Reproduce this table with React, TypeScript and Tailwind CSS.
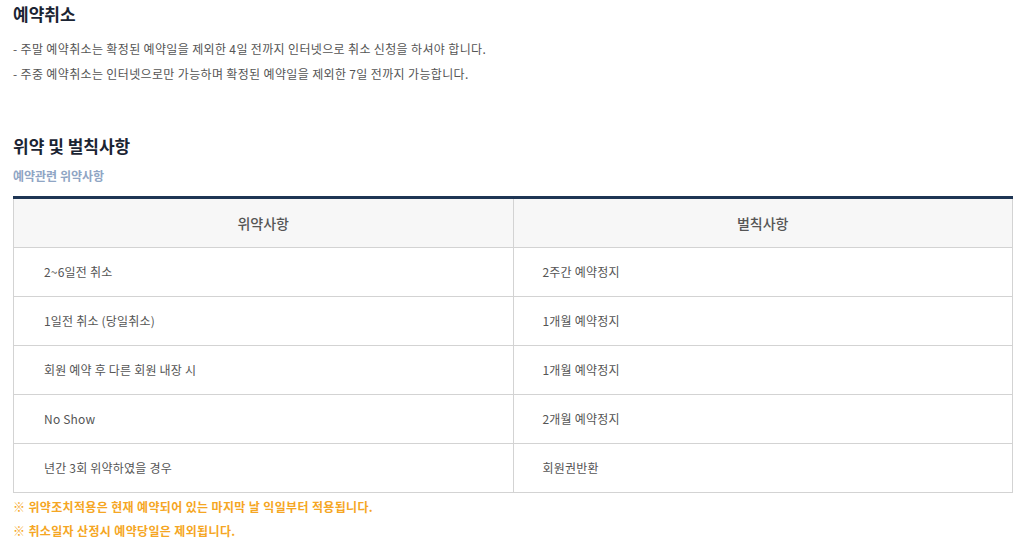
const rows: [string, string][] = [
  ['2~6일전 취소', '2주간 예약정지'],
  ['1일전 취소 (당일취소)', '1개월 예약정지'],
  ['회원 예약 후 다른 회원 내장 시', '1개월 예약정지'],
  ['No Show', '2개월 예약정지'],
  ['년간 3회 위약하였을 경우', '회원권반환'],
];

export default function App() {
  return (
    <div
      className="w-[1026px] h-[549px] bg-white text-[#555] overflow-hidden"
      style={{ fontFamily: '"Noto Sans CJK KR", "Noto Sans", sans-serif' }}
    >
      <div className="w-[1000px] ml-[13px]">
        <h2 className="text-[17px] font-bold leading-[28px] text-[#1b2433]">예약취소</h2>
        <div className="mt-[8px] text-[12px] leading-[25px] tracking-[0.35px] text-[#555]">
          <p>- 주말 예약취소는 확정된 예약일을 제외한 4일 전까지 인터넷으로 취소 신청을 하셔야 합니다.</p>
          <p>- 주중 예약취소는 인터넷으로만 가능하며 확정된 예약일을 제외한 7일 전까지 가능합니다.</p>
        </div>

        <h2 className="mt-[46px] text-[17px] font-bold leading-[28px] text-[#1b2433]">위약 및 벌칙사항</h2>
        <div className="mt-[6px] text-[12px] font-bold leading-[20px] text-[#8fa5c4]">예약관련 위약사항</div>

        <table className="mt-[10px] w-full border-collapse border-t-[3px] border-t-[#1e3554] table-fixed">
          <thead>
            <tr className="h-[50px] bg-[#f7f7f7]">
              <th className="w-1/2 border border-[#d3d3d3] border-t-0 text-[14px] font-medium text-[#555]">위약사항</th>
              <th className="w-1/2 border border-[#d3d3d3] border-t-0 text-[14px] font-medium text-[#555]">벌칙사항</th>
            </tr>
          </thead>
          <tbody>
            {rows.map(([a, b]) => (
              <tr key={a} className="h-[49px]">
                <td className="border border-[#d3d3d3] pl-[30px] text-[12px] tracking-[0.2px] text-[#555]">{a}</td>
                <td className="border border-[#d3d3d3] pl-[29px] text-[12px] tracking-[0.2px] text-[#555]">{b}</td>
              </tr>
            ))}
          </tbody>
        </table>

        <div className="mt-[2px] text-[12px] font-bold leading-[24px] tracking-[0.35px] text-[#f5a623]">
          <p>※ 위약조치적용은 현재 예약되어 있는 마지막 날 익일부터 적용됩니다.</p>
          <p>※ 취소일자 산정시 예약당일은 제외됩니다.</p>
        </div>
      </div>
    </div>
  );
}
